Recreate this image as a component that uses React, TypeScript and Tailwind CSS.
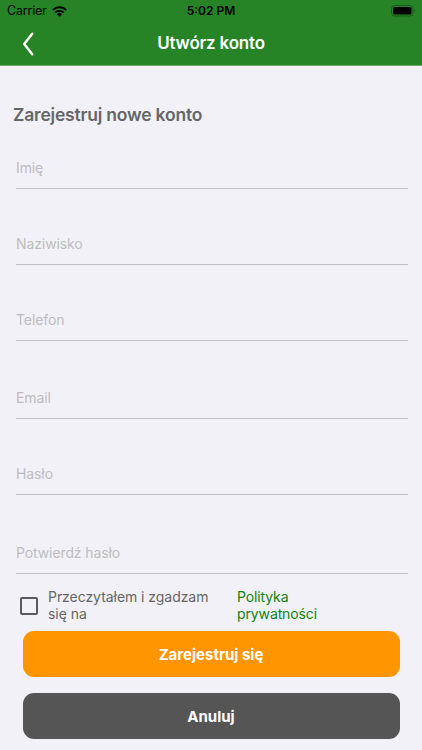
import React from 'react';

interface FieldProps {
  name: string;
  placeholder: string;
  type?: string;
  className: string;
}

const Field: React.FC<FieldProps> = ({ name, placeholder, type = 'text', className }) => (
  <div className={`flex items-end border-b border-[#c0c0c5] ${className}`}>
    <input
      name={name}
      type={type}
      placeholder={placeholder}
      aria-label={placeholder}
      className="mb-[9px] h-6 w-full bg-transparent text-[14px] tracking-[-0.1px] text-[#666666] outline-none placeholder:text-[#bdbdc1]"
    />
  </div>
);

const StatusBar = () => (
  <div className="flex h-[22px] items-center justify-between pl-[7px] pr-[6px] text-black">
    <div className="flex flex-1 items-center gap-[5px]">
      <span className="text-[12.5px] tracking-[-0.2px]">Carrier</span>
      <svg width="15" height="11" viewBox="0 0 15 11" fill="none" stroke="currentColor" aria-hidden="true">
        <path d="M0.8 4 A9.6 9.6 0 0 1 14.2 4" strokeWidth="2" />
        <path d="M3.2 6.6 A6.1 6.1 0 0 1 11.8 6.6" strokeWidth="1.9" />
        <path d="M7.5 10.8 L5 8.3 A3.6 3.6 0 0 1 10 8.3 Z" fill="currentColor" stroke="none" />
      </svg>
    </div>
    <span className="pr-px text-[12px] font-semibold">5:02 PM</span>
    <div className="flex flex-1 justify-end pb-px">
      <svg width="25" height="12" viewBox="0 0 25 12" aria-hidden="true">
        <rect x="0.5" y="0.5" width="21.5" height="10.5" rx="3" fill="none" stroke="#1a5b1a" />
        <rect x="2" y="2" width="18.5" height="7.5" rx="1.5" fill="#000" />
        <path d="M23.3 4 C24.7 4.4 24.7 7.1 23.3 7.5 Z" fill="#1a5b1a" />
      </svg>
    </div>
  </div>
);

export default function App() {
  return (
    <div className="flex h-[750px] w-[422px] flex-col overflow-hidden bg-[#f2f1f7] font-['Inter',sans-serif]">
      <header className="h-[66px] shrink-0 border-b border-[#6cab6c] bg-[#268426]">
        <StatusBar />
        <div className="grid h-[43px] grid-cols-[1fr_auto_1fr] items-center">
          <button type="button" aria-label="Wstecz" className="ml-[22px] w-3 text-white">
            <svg width="12" height="24" viewBox="0 0 12 24" fill="none" stroke="currentColor" strokeWidth="2.4" aria-hidden="true">
              <path d="M10.2 1.8 L2.2 12 L10.2 22.2" strokeLinecap="round" strokeLinejoin="round" />
            </svg>
          </button>
          <h1 className="text-[17px] font-semibold tracking-[-0.2px] text-white">Utwórz konto</h1>
        </div>
      </header>

      <form className="flex flex-col" onSubmit={(e) => e.preventDefault()}>
        <h2 className="ml-[13px] mt-9 h-[26px] text-[17.5px] leading-[26px] font-semibold tracking-[-0.2px] text-[#666666]">
          Zarejestruj nowe konto
        </h2>

        <div className="ml-4 mr-[14px] flex flex-col">
          <Field name="firstName" placeholder="Imię" className="h-[61px]" />
          <Field name="lastName" placeholder="Naziwisko" className="h-[76px]" />
          <Field name="phone" placeholder="Telefon" className="h-[76px]" />
          <Field name="email" placeholder="Email" className="h-[78px]" />
          <Field name="password" placeholder="Hasło" type="password" className="h-[76px]" />
          <Field name="confirmPassword" placeholder="Potwierdź hasło" type="password" className="h-[79px]" />
        </div>

        <div className="mt-[14px] flex h-[34px] text-[14px] leading-[17px] tracking-[-0.05px]">
          <label className="flex w-[237px] pl-5">
            <input type="checkbox" className="peer sr-only" />
            <span className="mt-[9px] h-[18px] w-[18px] shrink-0 rounded-[2px] border-2 border-[#5a5a5e] peer-checked:bg-[#5a5a5e]" />
            <span className="ml-[10px] w-[170px] text-[#666666]">Przeczytałem i zgadzam się na</span>
          </label>
          <a href="#privacy" className="w-[90px] tracking-[-0.12px] text-[#138213]">
            Polityka prywatności
          </a>
        </div>

        <div className="mx-[22.5px] mt-[9px] flex flex-col gap-4 text-[15px] font-bold text-white">
          <button type="submit" className="h-[46px] rounded-[11px] bg-[#ff9500] pt-[2px]">
            Zarejestruj się
          </button>
          <button type="button" className="h-[46px] rounded-[11px] bg-[#555555] pt-[2px]">
            Anuluj
          </button>
        </div>
      </form>
    </div>
  );
}
